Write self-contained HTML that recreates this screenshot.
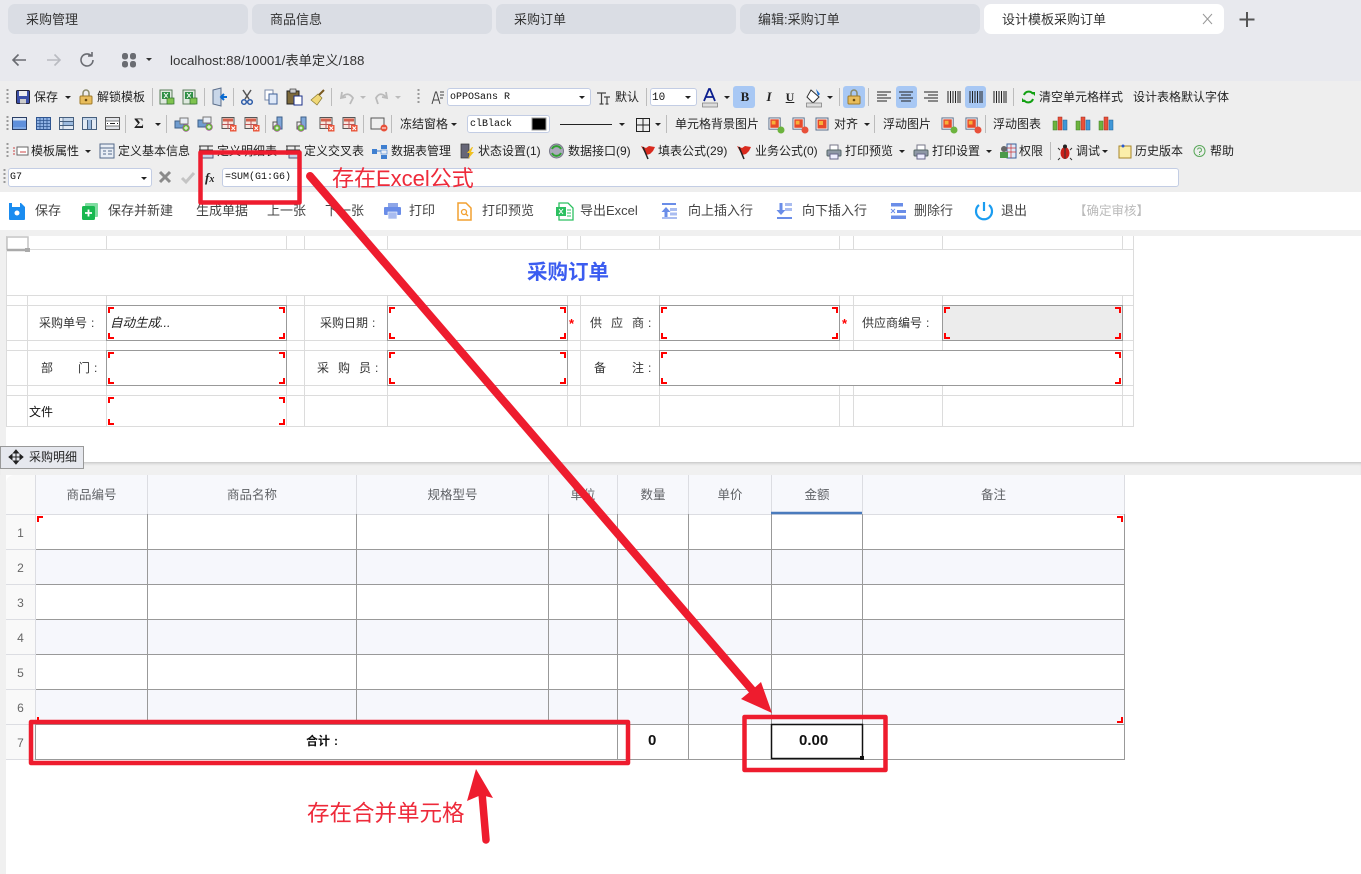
<!DOCTYPE html>
<html><head><meta charset="utf-8"><title>设计模板采购订单</title>
<style>
html,body{margin:0;padding:0}
body{width:1361px;height:874px;overflow:hidden;position:relative;background:#fff;font-family:"Liberation Sans","Noto Sans CJK SC",sans-serif;font-size:12px;color:#222}
.b{position:absolute}
.t{position:absolute;white-space:nowrap;line-height:16px;height:16px}
.tab{position:absolute;top:4px;height:30px;width:240px;background:#dadde4;border-radius:7px;font-size:13px;line-height:32px;color:#333}
.tab span{margin-left:18px}
.w{font-size:13px;color:#444}
.lb{font-size:12px;color:#333}
.lb i{font-style:normal;margin-left:4px}
.h{font-size:12.5px;color:#606266;text-align:center}
.n{font-size:12px;color:#666;width:29px;text-align:center;left:6px}
.m{font-family:"Liberation Mono",monospace;font-size:10px;color:#111}
.combo{position:absolute;background:#fff;border:1px solid #c3cde4;border-radius:3px;box-sizing:border-box}
svg{position:absolute;left:0;top:0}
</style></head><body>
<div class="b" style="left:0;top:0;width:1361px;height:81px;background:#e8e9ee"></div>
<div class="b" style="left:0;top:81px;width:1361px;height:111px;background:#eeeeee"></div>
<div class="b" style="left:0;top:230px;width:1361px;height:6px;background:#f0f0f0"></div>
<div class="b" style="left:0;top:236px;width:6px;height:638px;background:#f0f0f0"></div>
<div class="b" style="left:0;top:462px;width:1361px;height:13px;background:#f0f0f0;box-shadow:inset 0 3px 3px -2px #bbb"></div>

<div class="tab" style="left:8px"><span>采购管理</span></div>
<div class="tab" style="left:252px"><span>商品信息</span></div>
<div class="tab" style="left:496px"><span>采购订单</span></div>
<div class="tab" style="left:740px"><span>编辑:采购订单</span></div>
<div class="tab" style="left:984px;background:#fff"><span>设计模板采购订单</span></div>
<div class="t" style="left:170px;top:53px;font-size:13.3px;color:#333">localhost:88/10001/表单定义/188</div>

<div class="combo" style="left:447px;top:88px;width:144px;height:18px"></div>
<div class="combo" style="left:650px;top:88px;width:47px;height:18px"></div>
<div class="combo" style="left:467px;top:115px;width:83px;height:18px"></div>
<div class="combo" style="left:8px;top:168px;width:144px;height:19px"></div>
<div class="combo" style="left:222px;top:168px;width:957px;height:19px"></div>
<div class="b" style="left:733px;top:86px;width:22px;height:22px;background:#a8c8f4;border-radius:3px"></div>
<div class="b" style="left:843px;top:86px;width:22px;height:22px;background:#a8c8f4;border-radius:3px"></div>
<div class="b" style="left:896px;top:86px;width:21px;height:22px;background:#a8c8f4;border-radius:3px"></div>
<div class="b" style="left:965px;top:86px;width:21px;height:22px;background:#a8c8f4;border-radius:3px"></div>

<div class="b" style="left:943px;top:305px;width:179px;height:35px;background:#ececec"></div>
<div class="b" style="left:36px;top:475px;width:1088px;height:39px;background:#f7f8fc"></div>
<div class="b" style="left:6px;top:475px;width:30px;height:285px;background:#f9f9f9;border-top-left-radius:8px"></div>
<div class="b" style="left:36px;top:549px;width:1088px;height:35px;background:#f6f7fc"></div>
<div class="b" style="left:36px;top:619px;width:1088px;height:35px;background:#f6f7fc"></div>
<div class="b" style="left:36px;top:689px;width:1088px;height:35px;background:#f6f7fc"></div>

<svg width="1361" height="874" viewBox="0 0 1361 874" xmlns="http://www.w3.org/2000/svg">
<defs>
<symbol id="corner" viewBox="0 0 6 6"><path d="M0 6V0H6V2H2V6Z" fill="#f00"/></symbol>
<symbol id="xl" viewBox="0 0 16 16"><rect x="1" y="1" width="12" height="14" fill="#dfe9df" stroke="#5b7d5b"/><rect x="3" y="3" width="8" height="7" fill="#2f8f46"/><path d="M5 4l4 5M9 4l-4 5" stroke="#fff"/><rect x="8" y="9" width="7" height="6" fill="#7fc34f" stroke="#2c6e2c" stroke-width=".7"/></symbol>
<symbol id="t1" viewBox="0 0 15 15"><rect x=".5" y="1.500" width="14" height="12" fill="#5f90dc" stroke="#2b3f66"/><rect x="1" y="2" width="13" height="2.500" fill="#dbe6f4"/><path d="M1 12H14" stroke="#9cc0ee"/></symbol>
<symbol id="t2" viewBox="0 0 15 15"><rect x=".5" y="1.500" width="14" height="12" fill="#8fb2e4" stroke="#2f5590"/><path d="M.5 4.500H14.500M.5 7.500H14.500M.5 10.500H14.500M4 1.500V13.500M7.500 1.500V13.500M11 1.500V13.500" stroke="#2f5590" stroke-width=".8"/></symbol>
<symbol id="t3" viewBox="0 0 15 15"><rect x=".5" y="1.500" width="14" height="12" fill="#e4ebf4" stroke="#47607f"/><path d="M.5 5.500H14.500M.5 9.500H14.500" stroke="#47607f"/><rect x="4" y="6" width="10" height="3" fill="#9dbbdf"/><rect x="4" y="2" width="10" height="3" fill="#c3d5ea"/><path d="M4 1.500V13.500" stroke="#47607f" stroke-width=".7"/></symbol>
<symbol id="t4" viewBox="0 0 15 15"><rect x=".5" y="1.500" width="14" height="12" fill="#e4ebf4" stroke="#47607f"/><path d="M5.500 1.500V13.500M9.500 1.500V13.500" stroke="#47607f"/><rect x="6" y="4" width="3" height="9" fill="#9dbbdf"/><rect x="1" y="2" width="13" height="2" fill="#c3d5ea"/></symbol>
<symbol id="t5" viewBox="0 0 15 15"><rect x=".5" y="1.500" width="14" height="12" fill="#e2e4e8" stroke="#555"/><rect x="1" y="5" width="13" height="5" fill="#fff"/><path d="M.5 5H14.500M.5 10H14.500" stroke="#777"/><path d="M5 7.500H10M2 7.500h1M12 7.500h1" stroke="#222"/></symbol>
<symbol id="rd" viewBox="0 0 16 16"><rect x="1" y="1.500" width="12" height="11" fill="#f7e6df" stroke="#555"/><rect x="2" y="2.500" width="10" height="3" fill="#d4604c"/><path d="M1 8.500H13M7 5V13" stroke="#b55"/><rect x="9" y="9" width="6.500" height="6.500" fill="#e9553a"/><path d="M10.500 10.500l3.500 3.500M14 10.500l-3.500 3.500" stroke="#fff" stroke-width="1.100"/></symbol>
<symbol id="ad" viewBox="0 0 16 16"><rect x="1" y="5" width="9" height="7" fill="#6f9ccf" stroke="#3c5f88"/><rect x="6" y="2" width="8" height="6" fill="#e9eef5" stroke="#777"/><circle cx="12" cy="12" r="3.500" fill="#6cb33e" stroke="#a73da7" stroke-width=".5"/><path d="M10 12H14M12 10V14" stroke="#fff"/></symbol>
<symbol id="col" viewBox="0 0 16 16"><rect x="5" y="1" width="5" height="12" fill="#7fa7d8" stroke="#3c5f88"/><rect x="1" y="6" width="4" height="7" fill="#eee" stroke="#555"/><circle cx="5" cy="12" r="3.500" fill="#6cb33e" stroke="#a73da7" stroke-width=".5"/><path d="M3.500 12H6.500M5 10.500V13.500" stroke="#fff"/></symbol>
<symbol id="pic" viewBox="0 0 16 16"><rect x="1" y="1" width="12" height="12" fill="#f5f5f5" stroke="#5a6d8a"/><rect x="2.500" y="2.500" width="9" height="9" fill="#e84a2a"/><rect x="4" y="4" width="4" height="4" fill="#f7b13a"/></symbol>
<symbol id="chart" viewBox="0 0 16 16"><rect x="1" y="5" width="4" height="9" fill="#6cb33e" stroke="#3b7a22" stroke-width=".5"/><rect x="6" y="1" width="4" height="13" fill="#e8503a" stroke="#a02a1c" stroke-width=".5"/><rect x="11" y="4" width="4" height="10" fill="#3f97d8" stroke="#1f5f90" stroke-width=".5"/></symbol>
<symbol id="print" viewBox="0 0 16 16"><rect x="4" y="1" width="8" height="5" fill="#fff" stroke="#778"/><rect x="1" y="6" width="14" height="6" rx="1" fill="#8e98a6" stroke="#566"/><rect x="4" y="10" width="8" height="5" fill="#eef" stroke="#668"/></symbol>
<symbol id="flag" viewBox="0 0 16 16"><path d="M1 2l5 2 3-2 6 1-2 4-3 3-4 1Z" fill="#d92a1e"/><path d="M3 3L8 15" stroke="#222" stroke-width="1.500"/></symbol>
<symbol id="al" viewBox="0 0 14 12"><path d="M0 1H14M0 4H10M0 7H14M0 10H10" stroke="#222" fill="none"/></symbol>
<symbol id="ac" viewBox="0 0 14 12"><path d="M0 1H14M2 4H12M0 7H14M2 10H12" stroke="#222" fill="none"/></symbol>
<symbol id="ar" viewBox="0 0 14 12"><path d="M0 1H14M4 4H14M0 7H14M4 10H14" stroke="#222" fill="none"/></symbol>
<symbol id="bars" viewBox="0 0 14 14"><path d="M1 1V13M3.500 1V13M6 1V13M8.500 1V13M11 1V13M13 1V13" stroke="#222" fill="none"/></symbol>
<symbol id="lock" viewBox="0 0 14 16"><path d="M4 7V4a3 3 0 0 1 6 0V7" fill="none" stroke="#8a8a6a" stroke-width="1.500"/><rect x="1" y="7" width="12" height="8" rx="1" fill="#e8bd5c" stroke="#a07a28"/><circle cx="7" cy="11" r="1.300" fill="#6a4a10"/></symbol>
<symbol id="save" viewBox="0 0 14 14"><rect x="0.500" y="0.500" width="13" height="13" rx="1" fill="#3b4fa8" stroke="#223"/><rect x="3" y="1" width="8" height="5" fill="#eee"/><rect x="4" y="9" width="6" height="4.500" fill="#ccc"/></symbol>
<symbol id="grip" viewBox="0 0 3 18"><path d="M1.500 1V17" stroke="#999" stroke-width="2" stroke-dasharray="2 2"/></symbol>
</defs>

<!-- browser icons -->
<path d="M26 60H13M18.500 54.500L13 60L18.500 65.500" fill="none" stroke="#6a6c72" stroke-width="1.600"/>
<path d="M47 60H60M54.500 54.500L60 60L54.500 65.500" fill="none" stroke="#b9bbc1" stroke-width="1.600"/>
<path d="M93 60a6 6 0 1 1-2-4.500M92 52v4h-4" fill="none" stroke="#6a6c72" stroke-width="1.600"/>
<rect x="122" y="53" width="6" height="6.500" rx="2.500" fill="#6a6c72"/><rect x="130" y="53" width="6" height="6.500" rx="2.500" fill="#6a6c72"/><rect x="122" y="61" width="6" height="6.500" rx="2.500" fill="#6a6c72"/><rect x="130" y="61" width="6" height="6.500" rx="2.500" fill="#6a6c72"/>
<path d="M146 58h6l-3 3z" fill="#333"/>
<path d="M1203 14l9 10M1212 14l-9 10" stroke="#999" stroke-width="1"/>
<path d="M1247 12V27M1239.500 19.500H1254.500" stroke="#555" stroke-width="2"/>

<!-- toolbar separators -->
<path d="M152.500 88V106M204.500 88V106M233.500 88V106M331.500 88V106M646.500 88V106M839.500 88V106M868.500 88V106M1013.500 88V106M125.500 115V133M166.500 115V133M265.500 115V133M363.500 115V133M391.500 115V133M666.500 115V133M874.500 115V133M985.500 115V133M1050.500 142V160" stroke="#bcbcbc"/>
<use href="#grip" x="6" y="88" width="3" height="18"/><use href="#grip" x="417" y="88" width="3" height="18"/><use href="#grip" x="6" y="115" width="3" height="18"/><use href="#grip" x="6" y="142" width="3" height="18"/><use href="#grip" x="3" y="168" width="3" height="18"/>

<!-- row 1 -->
<use href="#save" x="16" y="90" width="14" height="14"/><path d="M65 96h6l-3 3z" fill="#222"/>
<use href="#lock" x="79" y="89" width="14" height="16"/>
<use href="#xl" x="159" y="89" width="16" height="16"/><use href="#xl" x="182" y="89" width="16" height="16"/>
<path d="M213 90l8-2V106l-8-2Z" fill="#c8d6e8" stroke="#5a6d8a"/><path d="M227 97h-5M224 94l-3 3 3 3" stroke="#0a6ad0" stroke-width="2" fill="none"/>
<path d="M243 90l6 9M251 90l-6 9" stroke="#555" stroke-width="1.500"/><circle cx="244" cy="102" r="2.300" fill="none" stroke="#2a5aa8" stroke-width="1.500"/><circle cx="250" cy="102" r="2.300" fill="none" stroke="#2a5aa8" stroke-width="1.500"/>
<rect x="265" y="90" width="8" height="10" fill="#fff" stroke="#7a8aa8"/><rect x="269" y="94" width="8" height="10" fill="#dfe9f8" stroke="#3c5f98"/>
<rect x="287" y="91" width="12" height="13" fill="#7d6a3a" stroke="#222"/><rect x="290" y="89" width="6" height="4" fill="#ccc" stroke="#222" stroke-width=".6"/><rect x="294" y="96" width="8" height="9" fill="#fff" stroke="#1a2f88"/>
<path d="M324 90l-6 6" stroke="#7a5a20" stroke-width="2"/><path d="M318 94l4 4-5 7-6-5Z" fill="#f0d878" stroke="#8a7a30" stroke-width=".7"/>
<path d="M342 92l-1 6 5-1M342 97q6-6 11 1l-3 6" fill="none" stroke="#bbb" stroke-width="1.800"/><path d="M360 96h6l-3 3z" fill="#bbb"/>
<path d="M386 92l1 6-5-1M386 97q-6-6-10 1l2 6" fill="none" stroke="#bbb" stroke-width="1.800"/><path d="M395 96h6l-3 3z" fill="#bbb"/>
<path d="M432 104l3.500-12h1l3.500 12M433.500 100h5M440 92h4M440 95h4M440 98h3" fill="none" stroke="#444" stroke-width="1"/>
<path d="M579 96h6l-3 3z" fill="#222"/>
<path d="M597 93h9M601.500 93V104M599.500 104h4M604 97h6M607 97v7M605.500 104h3" fill="none" stroke="#444" stroke-width="1.200"/>
<path d="M685 96h6l-3 3z" fill="#222"/>
<path d="M704 101l5-12h1l5 12M706 97h7" fill="none" stroke="#0c1f8f" stroke-width="1.800"/><rect x="702.500" y="103" width="15" height="4" fill="#ddd" stroke="#777" stroke-width=".7"/><path d="M724 96h6l-3 3z" fill="#222"/>
<path d="M811 90l8 7-6 6-6-6Z" fill="#fff" stroke="#333"/><path d="M816 89l4 5-2 2" fill="#1f6fd0"/><rect x="806.500" y="103" width="15" height="4" fill="#ddd" stroke="#777" stroke-width=".7"/><path d="M827 96h6l-3 3z" fill="#222"/>
<use href="#lock" x="847" y="89" width="14" height="16"/>
<use href="#al" x="877" y="91" width="14" height="12"/><use href="#ac" x="899" y="91" width="14" height="12"/><use href="#ar" x="924" y="91" width="14" height="12"/>
<use href="#bars" x="947" y="90" width="14" height="14"/><use href="#bars" x="969" y="90" width="14" height="14"/><use href="#bars" x="993" y="90" width="14" height="14"/>
<path d="M1024 95a5 5 0 0 1 9-1M1033 99a5 5 0 0 1-9 1" fill="none" stroke="#12a012" stroke-width="2"/><path d="M1031 92h4v4zM1026 102h-4v-4z" fill="#12a012"/>

<!-- row 2 -->
<use href="#t1" x="12" y="116" width="15" height="15"/><use href="#t2" x="36" y="116" width="15" height="15"/><use href="#t3" x="59" y="116" width="15" height="15"/><use href="#t4" x="82" y="116" width="15" height="15"/><use href="#t5" x="105" y="116" width="15" height="15"/>
<path d="M155 123h6l-3 3z" fill="#222"/>
<use href="#ad" x="174" y="116" width="16" height="16"/><use href="#ad" x="197" y="115" width="16" height="16"/><use href="#rd" x="221" y="116" width="16" height="16"/><use href="#rd" x="244" y="116" width="16" height="16"/>
<use href="#col" x="272" y="116" width="16" height="16"/><use href="#col" x="296" y="116" width="16" height="16"/><use href="#rd" x="319" y="116" width="16" height="16"/><use href="#rd" x="342" y="116" width="16" height="16"/>
<rect x="371" y="118" width="13" height="11" fill="#eee" stroke="#555"/><circle cx="384" cy="128" r="3.500" fill="#e8503a"/><path d="M382 128h4" stroke="#fff"/>
<path d="M451 123h6l-3 3z" fill="#222"/>
<rect x="532" y="118" width="14" height="12" fill="#000" stroke="#999"/>
<path d="M560 124.500H612" stroke="#222"/><path d="M619 123h6l-3 3z" fill="#222"/>
<path d="M636.500 118.500h13v13h-13zM643 118.500v13M636.500 125h13" fill="none" stroke="#222"/><path d="M655 123h6l-3 3z" fill="#222"/>
<use href="#pic" x="768" y="117" width="15" height="15"/><circle cx="781" cy="130" r="3.500" fill="#6cb33e"/><use href="#pic" x="792" y="117" width="15" height="15"/><circle cx="805" cy="130" r="3.500" fill="#e8503a"/>
<use href="#pic" x="815" y="117" width="16" height="16"/><path d="M864 123h6l-3 3z" fill="#222"/>
<use href="#pic" x="941" y="117" width="15" height="15"/><circle cx="954" cy="130" r="3.500" fill="#6cb33e"/><use href="#pic" x="965" y="117" width="15" height="15"/><circle cx="978" cy="130" r="3.500" fill="#e8503a"/>
<use href="#chart" x="1052" y="116" width="16" height="16"/><use href="#chart" x="1075" y="116" width="16" height="16"/><use href="#chart" x="1098" y="116" width="16" height="16"/>

<!-- row 3 -->
<rect x="17" y="147" width="11" height="8" fill="#fff" stroke="#666"/><path d="M13 148h2M13 151h2M13 154h2M20 152h6" stroke="#c44"/>
<path d="M85 150h6l-3 3z" fill="#222"/>
<rect x="100" y="144" width="14" height="14" fill="#e9eef5" stroke="#556b8a"/><path d="M100 148h14M103 151h3M103 154h3M108 151h4M108 154h4" stroke="#556b8a"/>
<path d="M200 146v9M208 146v9M199 146h14M199 150h14" stroke="#333" fill="none"/><rect x="202" y="151" width="11" height="7" fill="#c8d6e8" stroke="#557"/>
<path d="M287 146v9M295 146v9M286 146h14M286 150h14" stroke="#333" fill="none"/><rect x="289" y="151" width="11" height="7" fill="#c8d6e8" stroke="#557"/>
<rect x="372" y="149" width="5" height="5" fill="#3f7fd0"/><rect x="381" y="145" width="6" height="4" fill="#3f7fd0"/><rect x="381" y="150" width="6" height="4" fill="#e9eef5" stroke="#3f7fd0" stroke-width=".6"/><rect x="381" y="155" width="6" height="4" fill="#3f7fd0"/><path d="M377 151h4" stroke="#3f7fd0"/>
<rect x="461" y="144" width="8" height="14" fill="#667" stroke="#333" stroke-width=".7"/><path d="M472 147l-5 6h3l-2 6 6-7h-3l2-5Z" fill="#f0c020"/>
<ellipse cx="556.500" cy="151" rx="7" ry="7" fill="#aab" stroke="#778"/><path d="M552 149a5 5 0 0 1 9 0M561 153a5 5 0 0 1-9 0" fill="none" stroke="#30a030" stroke-width="2"/>
<use href="#flag" x="640" y="144" width="16" height="16"/><use href="#flag" x="736" y="144" width="16" height="16"/>
<use href="#print" x="826" y="144" width="16" height="16"/><path d="M899 150h6l-3 3z" fill="#222"/>
<use href="#print" x="913" y="144" width="16" height="16"/><path d="M986 150h6l-3 3z" fill="#222"/>
<rect x="1007" y="144" width="9" height="14" fill="#dfe9f8" stroke="#3c5f98"/><path d="M1007 148h9M1007 152h9M1011 144v14" stroke="#c33" stroke-width=".7"/><circle cx="1004" cy="149" r="3" fill="#666"/><rect x="1000" y="152" width="8" height="6" fill="#4a9a4a"/>
<ellipse cx="1065" cy="153" rx="4.500" ry="6" fill="#c8201a"/><circle cx="1065" cy="146.500" r="2" fill="#222"/><path d="M1060 150l-2-2M1070 150l2-2M1060 158l-2 2M1070 158l2 2M1065 148v11" stroke="#333"/>
<path d="M1102 150h6l-3 3z" fill="#222"/>
<rect x="1119" y="146" width="12" height="12" fill="#fbeeaa" stroke="#a8862a"/><circle cx="1123" cy="146" r="1.500" fill="#2a5ad0"/>
<circle cx="1199.500" cy="151" r="5.500" fill="none" stroke="#5aa85a"/><path d="M1197.500 149.500a2 2 0 1 1 2 2.500v1M1199.500 154v1" fill="none" stroke="#5aa85a"/>

<!-- formula bar -->
<path d="M144 177h6l-3 3z" fill="#222" transform="translate(-3,0)"/>
<path d="M160 172l10 10M170 172l-10 10" stroke="#8a8a8a" stroke-width="3"/>
<path d="M182 178l4 4 8-9" fill="none" stroke="#c4c4c4" stroke-width="3"/>

<!-- white toolbar icons -->
<path d="M9 203h12l4 4v12a1 1 0 0 1-1 1H10a1 1 0 0 1-1-1Z" fill="#1a8cf0"/><rect x="12" y="203" width="8" height="4" fill="#fff"/><circle cx="17" cy="213" r="2.500" fill="#fff"/>
<rect x="85" y="203" width="13" height="14" rx="1" fill="#7fdca0"/><rect x="82" y="206" width="13" height="14" rx="1.500" fill="#18b850"/><path d="M88.500 209.500v7M85 213h7" stroke="#fff" stroke-width="1.800"/>
<rect x="388" y="203" width="10" height="4" fill="#8ea6e8"/><rect x="384" y="207" width="17" height="8" rx="1" fill="#6a8de8"/><rect x="388" y="212" width="9" height="7" fill="#a9bcf0" stroke="#fff" stroke-width=".6"/>
<path d="M458 203h8l5 5v12h-13Z" fill="#fff" stroke="#f2a030" stroke-width="1.500"/><circle cx="464" cy="212" r="2.500" fill="none" stroke="#f2a030" stroke-width="1.300"/><path d="M466 214l2 2" stroke="#f2a030" stroke-width="1.300"/>
<path d="M559 203h9l5 5v12h-14Z" fill="#fff" stroke="#2cc060" stroke-width="1.300"/><rect x="556" y="207" width="10" height="9" fill="#2cc060"/><path d="M559 209l4 5M563 209l-4 5" stroke="#fff"/><path d="M567 210h4M567 213h4M567 216h4" stroke="#2cc060"/>
<path d="M662 204h14" stroke="#6a8de8" stroke-width="2"/><path d="M666 207l-4.500 5h3v7h3v-7h3Z" fill="#6a8de8"/><rect x="670" y="208" width="7" height="3" fill="#a9bcf0"/><rect x="670" y="212.500" width="7" height="3" fill="#a9bcf0"/><rect x="662" y="217" width="15" height="2" fill="#a9bcf0"/>
<path d="M777 218h15" stroke="#6a8de8" stroke-width="2"/><path d="M781 215l-4.500-5h3v-7h3v7h3Z" fill="#6a8de8"/><rect x="785" y="203" width="7" height="3" fill="#a9bcf0"/><rect x="785" y="208" width="7" height="3" fill="#a9bcf0"/>
<rect x="891" y="203" width="12" height="3.500" fill="#6a8de8"/><path d="M891 209l4 4M895 209l-4 4" stroke="#6a8de8"/><rect x="897" y="210" width="9" height="3" fill="#6a8de8"/><rect x="891" y="215.500" width="15" height="3.500" fill="#6a8de8"/>
<path d="M979 205a8 8 0 1 0 10 0" fill="none" stroke="#1a9cf0" stroke-width="2.200"/><path d="M984 202v9" stroke="#1a9cf0" stroke-width="2.200"/>

<!-- form grid -->
<g stroke="#dcdcdc" fill="none">
<path d="M6.500 236V426M1133.500 236V426"/>
<path d="M6 249.500H1134M6 295.500H1134M6 305.500H1134M6 340.500H1134M6 350.500H1134M6 385.500H1134M6 395.500H1134M6 426.500H1134"/>
<path d="M106.500 236V249M286.500 236V249M304.500 236V249M387.500 236V249M567.500 236V249M580.500 236V249M659.500 236V249M839.500 236V249M853.500 236V249M942.500 236V249M1122.500 236V249"/>
<path d="M27.500 295V426M106.500 295V426M286.500 295V426M304.500 295V426M387.500 295V426M567.500 295V426M580.500 295V426M659.500 295V426M839.500 295V350M853.500 295V350M942.500 295V350M1122.500 295V426M839.500 385V426M853.500 385V426M942.500 385V426"/>
</g>
<g fill="none" stroke="#999"><rect x="106.500" y="305.500" width="180" height="35"/><rect x="387.500" y="305.500" width="180" height="35"/><rect x="659.500" y="305.500" width="180" height="35"/><rect x="942.500" y="305.500" width="180" height="35"/><rect x="106.500" y="350.500" width="180" height="35"/><rect x="387.500" y="350.500" width="180" height="35"/><rect x="659.500" y="350.500" width="463" height="35"/></g>
<path d="M7 250V237H28V250" fill="none" stroke="#c4c4c4" stroke-width="1.500"/><rect x="25" y="248" width="5" height="4" fill="#aaa"/><path d="M7 250H28" stroke="#aaa" stroke-width="2.500"/>

<!-- red corners form -->
<g id="cc">
<use href="#corner" x="108" y="307" width="6" height="6"/><use href="#corner" transform="translate(285,307) scale(-1,1)" width="6" height="6"/><use href="#corner" transform="translate(108,339) scale(1,-1)" width="6" height="6"/><use href="#corner" transform="translate(285,339) scale(-1,-1)" width="6" height="6"/>
<use href="#corner" x="389" y="307" width="6" height="6"/><use href="#corner" transform="translate(566,307) scale(-1,1)" width="6" height="6"/><use href="#corner" transform="translate(389,339) scale(1,-1)" width="6" height="6"/><use href="#corner" transform="translate(566,339) scale(-1,-1)" width="6" height="6"/>
<use href="#corner" x="661" y="307" width="6" height="6"/><use href="#corner" transform="translate(838,307) scale(-1,1)" width="6" height="6"/><use href="#corner" transform="translate(661,339) scale(1,-1)" width="6" height="6"/><use href="#corner" transform="translate(838,339) scale(-1,-1)" width="6" height="6"/>
<use href="#corner" x="944" y="307" width="6" height="6"/><use href="#corner" transform="translate(1121,307) scale(-1,1)" width="6" height="6"/><use href="#corner" transform="translate(944,339) scale(1,-1)" width="6" height="6"/><use href="#corner" transform="translate(1121,339) scale(-1,-1)" width="6" height="6"/>
<use href="#corner" x="108" y="352" width="6" height="6"/><use href="#corner" transform="translate(285,352) scale(-1,1)" width="6" height="6"/><use href="#corner" transform="translate(108,384) scale(1,-1)" width="6" height="6"/><use href="#corner" transform="translate(285,384) scale(-1,-1)" width="6" height="6"/>
<use href="#corner" x="389" y="352" width="6" height="6"/><use href="#corner" transform="translate(566,352) scale(-1,1)" width="6" height="6"/><use href="#corner" transform="translate(389,384) scale(1,-1)" width="6" height="6"/><use href="#corner" transform="translate(566,384) scale(-1,-1)" width="6" height="6"/>
<use href="#corner" x="661" y="352" width="6" height="6"/><use href="#corner" transform="translate(1121,352) scale(-1,1)" width="6" height="6"/><use href="#corner" transform="translate(661,384) scale(1,-1)" width="6" height="6"/><use href="#corner" transform="translate(1121,384) scale(-1,-1)" width="6" height="6"/>
<use href="#corner" x="108" y="397" width="6" height="6"/><use href="#corner" transform="translate(285,397) scale(-1,1)" width="6" height="6"/><use href="#corner" transform="translate(108,425) scale(1,-1)" width="6" height="6"/><use href="#corner" transform="translate(285,425) scale(-1,-1)" width="6" height="6"/>
</g>

<!-- band tab -->
<rect x="0.500" y="446.500" width="83" height="22" fill="#e6e8ee" stroke="#999"/>
<path d="M16 451V463M10 457H22M16 450l-2.500 3h5ZM16 464l-2.500-3h5ZM9 457l3-2.500v5ZM23 457l-3-2.500v5Z" fill="#222" stroke="#222" stroke-width="1"/>

<!-- detail table -->
<g stroke="#dcdde2" fill="none"><path d="M6 514.500H1124M35.500 475V514M147.500 475V514M356.500 475V514M548.500 475V514M617.500 475V514M688.500 475V514M771.500 475V514M862.500 475V514M1124.500 475V514M6 549.500H36M6 584.500H36M6 619.500H36M6 654.500H36M6 689.500H36M6 724.500H36M6 759.500H36M35.500 514V760"/></g>
<g stroke="#999" fill="none"><path d="M36 549.500H1125M36 584.500H1125M36 619.500H1125M36 654.500H1125M36 689.500H1125M36 724.500H1125M36 759.500H1125M147.500 514V724M356.500 514V724M548.500 514V724M617.500 514V760M688.500 514V760M771.500 514V760M862.500 514V760M1124.500 514V760M35.500 724V760"/></g>
<path d="M771 513H862" stroke="#4a7bbd" stroke-width="2.500"/>
<use href="#corner" x="37" y="516" width="6" height="6"/><use href="#corner" transform="translate(1123,516) scale(-1,1)" width="6" height="6"/><use href="#corner" transform="translate(1123,723) scale(-1,-1)" width="6" height="6"/><use href="#corner" transform="translate(37,723) scale(1,-1)" width="6" height="6"/>
<rect x="771.500" y="724.500" width="91" height="34" fill="#fff" stroke="#111" stroke-width="1.500"/><rect x="860" y="756" width="4" height="4" fill="#111"/>
</svg>

<!-- row 1 text -->
<div class="t" style="left:34px;top:89px">保存</div>
<div class="t" style="left:97px;top:89px">解锁模板</div>
<div class="t m" style="left:450px;top:90px">oPPOSans R</div>
<div class="t" style="left:615px;top:89px">默认</div>
<div class="t m" style="left:652px;top:90px;font-size:11px">10</div>
<div class="t" style="left:739px;top:89px;width:12px;text-align:center;font-family:'Liberation Serif',serif;font-weight:bold;font-size:13px">B</div>
<div class="t" style="left:763px;top:89px;width:12px;text-align:center;font-family:'Liberation Serif',serif;font-style:italic;font-weight:bold;font-size:13px">I</div>
<div class="t" style="left:784px;top:89px;width:12px;text-align:center;font-family:'Liberation Serif',serif;font-weight:bold;font-size:12px;text-decoration:underline">U</div>
<div class="t" style="left:1039px;top:89px">清空单元格样式</div>
<div class="t" style="left:1133px;top:89px">设计表格默认字体</div>

<!-- row 2 text -->
<div class="t" style="left:134px;top:116px;font-size:15px;font-family:'Liberation Serif',serif;font-weight:bold">Σ</div>
<div class="t" style="left:400px;top:116px">冻结窗格</div>
<div class="t m" style="left:470px;top:117px">clBlack</div>
<div class="t" style="left:675px;top:116px">单元格背景图片</div>
<div class="t" style="left:834px;top:116px">对齐</div>
<div class="t" style="left:883px;top:116px">浮动图片</div>
<div class="t" style="left:993px;top:116px">浮动图表</div>

<!-- row 3 text -->
<div class="t" style="left:31px;top:143px">模板属性</div>
<div class="t" style="left:118px;top:143px">定义基本信息</div>
<div class="t" style="left:217px;top:143px">定义明细表</div>
<div class="t" style="left:304px;top:143px">定义交叉表</div>
<div class="t" style="left:391px;top:143px">数据表管理</div>
<div class="t" style="left:478px;top:143px">状态设置(1)</div>
<div class="t" style="left:568px;top:143px">数据接口(9)</div>
<div class="t" style="left:658px;top:143px">填表公式(29)</div>
<div class="t" style="left:755px;top:143px">业务公式(0)</div>
<div class="t" style="left:845px;top:143px">打印预览</div>
<div class="t" style="left:932px;top:143px">打印设置</div>
<div class="t" style="left:1019px;top:143px">权限</div>
<div class="t" style="left:1076px;top:143px">调试</div>
<div class="t" style="left:1135px;top:143px">历史版本</div>
<div class="t" style="left:1210px;top:143px">帮助</div>

<!-- formula -->
<div class="t m" style="left:10px;top:170px">G7</div>
<div class="t" style="left:205px;top:170px;font-family:'Liberation Serif',serif;font-style:italic;font-weight:bold;font-size:13px">f<span style="font-size:10px">x</span></div>
<div class="t m" style="left:225px;top:170px">=SUM(G1:G6)</div>

<!-- white toolbar -->
<div class="t w" style="left:35px;top:203px">保存</div>
<div class="t w" style="left:108px;top:203px">保存并新建</div>
<div class="t w" style="left:196px;top:203px">生成单据</div>
<div class="t w" style="left:267px;top:203px">上一张</div>
<div class="t w" style="left:325px;top:203px">下一张</div>
<div class="t w" style="left:409px;top:203px">打印</div>
<div class="t w" style="left:482px;top:203px">打印预览</div>
<div class="t w" style="left:580px;top:203px">导出Excel</div>
<div class="t w" style="left:688px;top:203px">向上插入行</div>
<div class="t w" style="left:802px;top:203px">向下插入行</div>
<div class="t w" style="left:914px;top:203px">删除行</div>
<div class="t w" style="left:1001px;top:203px">退出</div>
<div class="t" style="left:1074px;top:203px;font-size:12.500px;color:#bbb">【确定审核】</div>

<!-- form text -->
<div class="t" style="left:527px;top:261px;height:24px;line-height:24px;font-size:20.500px;font-weight:bold;color:#3b5cf0">采购订单</div>
<div class="t lb" style="left:39px;top:315px">采购单号<i>:</i></div>
<div class="t" style="left:110px;top:315px;font-style:italic;font-size:12.500px;color:#222">自动生成...</div>
<div class="t lb" style="left:320px;top:315px">采购日期<i>:</i></div>
<div class="t" style="left:569px;top:316px;color:#f00;font-weight:bold;font-size:13px">*</div>
<div class="t lb" style="left:590px;top:315px">供</div><div class="t lb" style="left:611px;top:315px">应</div><div class="t lb" style="left:632px;top:315px">商<i>:</i></div>
<div class="t" style="left:842px;top:316px;color:#f00;font-weight:bold;font-size:13px">*</div>
<div class="t lb" style="left:862px;top:315px">供应商编号<i>:</i></div>
<div class="t lb" style="left:41px;top:360px">部</div><div class="t lb" style="left:78px;top:360px">门<i>:</i></div>
<div class="t lb" style="left:317px;top:360px">采</div><div class="t lb" style="left:338px;top:360px">购</div><div class="t lb" style="left:359px;top:360px">员<i>:</i></div>
<div class="t lb" style="left:594px;top:360px">备</div><div class="t lb" style="left:632px;top:360px">注<i>:</i></div>
<div class="t" style="left:29px;top:404px;color:#111">文件</div>
<div class="t" style="left:29px;top:449px;color:#222">采购明细</div>

<!-- table text -->
<div class="t h" style="left:36px;width:111px;top:487px">商品编号</div>
<div class="t h" style="left:148px;width:208px;top:487px">商品名称</div>
<div class="t h" style="left:357px;width:191px;top:487px">规格型号</div>
<div class="t h" style="left:549px;width:68px;top:487px">单位</div>
<div class="t h" style="left:618px;width:70px;top:487px">数量</div>
<div class="t h" style="left:689px;width:82px;top:487px">单价</div>
<div class="t h" style="left:772px;width:90px;top:487px">金额</div>
<div class="t h" style="left:863px;width:261px;top:487px">备注</div>
<div class="t n" style="top:525px">1</div><div class="t n" style="top:560px">2</div><div class="t n" style="top:595px">3</div><div class="t n" style="top:630px">4</div><div class="t n" style="top:665px">5</div><div class="t n" style="top:700px">6</div><div class="t n" style="top:735px">7</div>
<div class="t" style="left:306px;top:733px;font-weight:bold;color:#111">合计<span style="margin-left:4px">:</span></div>
<div class="t" style="left:648px;top:733px;font-weight:bold;font-size:15px;color:#111">0</div>
<div class="t" style="left:799px;top:733px;font-weight:bold;font-size:15px;color:#111">0.00</div>

<!-- annotations -->
<svg width="1361" height="874" viewBox="0 0 1361 874" xmlns="http://www.w3.org/2000/svg">
<g fill="none" stroke="#ee1c2e" stroke-width="4.500" stroke-linejoin="round">
<rect x="200.500" y="152.500" width="99" height="50"/>
<rect x="31" y="722" width="597" height="41"/>
<rect x="744.500" y="717" width="141" height="53"/>
</g>
<path d="M310 176L753 691" stroke="#ee1c2e" stroke-width="8" stroke-linecap="round"/>
<path d="M772 713L741 699L752 690L761 682Z" fill="#ee1c2e"/>
<path d="M482 793L486 840" stroke="#ee1c2e" stroke-width="7.500" stroke-linecap="round"/>
<path d="M476 769L493 798L481 795L467 801Z" fill="#ee1c2e"/>
</svg>
<div class="t" style="left:332px;top:165px;height:28px;line-height:28px;font-size:22px;color:#ee2a3a">存在Excel公式</div>
<div class="t" style="left:307px;top:800px;height:28px;line-height:28px;font-size:22.500px;color:#ee2a3a">存在合并单元格</div>
</body></html>
